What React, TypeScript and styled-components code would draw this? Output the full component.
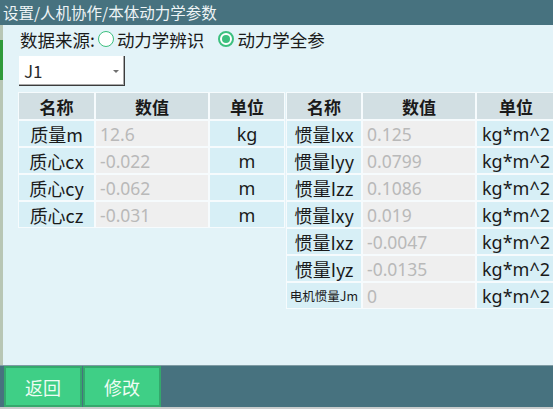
import React from "react";
import styled, { createGlobalStyle } from "styled-components";

const Global = createGlobalStyle`
  html, body { margin: 0; padding: 0; background: #e3f3f8; }
  body { font-family: "Noto Sans CJK SC", sans-serif; }
  * { box-sizing: border-box; }
`;

const Frame = styled.div`
  width: 553px;
  height: 409px;
  display: flex;
  flex-direction: column;
  overflow: hidden;
  background: #e3f3f8;
  font-family: "Noto Sans CJK SC", sans-serif;
`;

const TitleBar = styled.div`
  height: 25px;
  flex: none;
  background: #47727f;
  color: #eef4f6;
  font-family: "Noto Sans CJK SC", sans-serif;
  font-size: 15.5px;
  line-height: 25px;
  padding-left: 3px;
  white-space: nowrap;
`;

const Body = styled.div`
  flex: 1;
  display: flex;
  min-height: 0;
`;

const LeftStrip = styled.div`
  width: 3px;
  flex: none;
  background: #b8c6b5;
  display: flex;
  flex-direction: column;
  padding-top: 15px;
`;

const GreenMark = styled.div`
  height: 40px;
  background: #2f9a3a;
`;

const Content = styled.div`
  flex: 1;
  min-width: 0;
  overflow: hidden;
  padding: 2px 0 0 15px;
  display: flex;
  flex-direction: column;
  align-items: flex-start;
`;

const SourceRow = styled.div`
  height: 24px;
  display: flex;
  align-items: center;
  padding-left: 2px;
  font-family: "Noto Sans CJK SC", sans-serif;
  font-size: 17.5px;
  color: #1a1a1a;
  white-space: nowrap;
`;

const RadioDot = styled.span<{ $on?: boolean }>`
  width: 16px;
  height: 16px;
  border-radius: 50%;
  border: ${(p) => (p.$on ? "2px" : "1.5px")} solid #3cc07f;
  background: #fff;
  display: inline-flex;
  align-items: center;
  justify-content: center;
  margin: 0 3px 0 3px;
  &::after {
    content: "";
    width: 8px;
    height: 8px;
    border-radius: 50%;
    background: ${(p) => (p.$on ? "#3cc07f" : "transparent")};
  }
`;

const RadioLabel = styled.span`
  margin-right: 11px;
`;

const Select = styled.div`
  margin-top: 5px;
  margin-left: 1px;
  width: 106px;
  height: 30px;
  background: #fff;
  border-right: 1px solid #3c3c3c;
  border-bottom: 1px solid #3c3c3c;
  box-shadow: inset -1px -1px 0 #a9a9a9;
  display: flex;
  align-items: center;
  justify-content: space-between;
  padding: 0 5px 0 5px;
  font-family: "Noto Sans CJK SC", sans-serif;
  font-size: 17px;
  color: #2a2a2a;
`;

const Arrow = styled.span`
  width: 0;
  height: 0;
  border-left: 3px solid transparent;
  border-right: 3px solid transparent;
  border-top: 3px solid #707070;
  margin-top: 1px;
`;

const Tables = styled.div`
  margin-top: 6px;
  display: flex;
  align-items: flex-start;
`;

const Table = styled.div<{ $cols: string; $rows: number; $ml?: number }>`
  display: grid;
  grid-template-columns: ${(p) => p.$cols};
  grid-template-rows: 26px repeat(${(p) => p.$rows}, 25px);
  gap: 2px;
  padding: 1px;
  background: #f6fbfd;
  margin-left: ${(p) => p.$ml ?? 0}px;
  flex: none;
`;

const Head = styled.div`
  background: #d2dfe3;
  font-family: "Noto Sans CJK SC", sans-serif;
  font-weight: 700;
  font-size: 17px;
  color: #1a1a1a;
  display: flex;
  align-items: center;
  justify-content: center;
`;

const Cell = styled.div<{ $small?: boolean }>`
  background: #d7eff6;
  font-family: "Noto Sans CJK SC", sans-serif;
  font-size: ${(p) => (p.$small ? "12.5px" : "18px")};
  color: #1a1a1a;
  display: flex;
  align-items: center;
  justify-content: center;
  white-space: nowrap;
  overflow: hidden;
`;

const UnitCell = styled(Cell)`
  font-family: "Noto Sans", "Noto Sans CJK SC", sans-serif;
  font-size: 18px;
`;

const ValueCell = styled.div`
  background: #efefef;
  font-family: "Noto Sans", sans-serif;
  font-size: 17.5px;
  color: #b9b9b9;
  display: flex;
  align-items: center;
  padding-left: 4px;
  white-space: nowrap;
`;

const BottomBar = styled.div`
  height: 44px;
  flex: none;
  background: #47727f;
  border-top: 1px solid #7f9ba4;
  border-bottom: 2px solid #c9cccc;
  display: flex;
  align-items: stretch;
  gap: 1px;
  padding: 0 0 0 4px;
`;

const Button = styled.div`
  width: 78px;
  background: #3fcf86;
  border: 2px solid #34a86c;
  color: #eefcf3;
  font-family: "Noto Sans CJK SC", sans-serif;
  font-size: 18px;
  display: flex;
  align-items: center;
  justify-content: center;
`;

type Row = [string, string, string, boolean?];

const leftRows: Row[] = [
  ["质量m", "12.6", "kg"],
  ["质心cx", "-0.022", "m"],
  ["质心cy", "-0.062", "m"],
  ["质心cz", "-0.031", "m"],
];

const rightRows: Row[] = [
  ["惯量Ixx", "0.125", "kg*m^2"],
  ["惯量Iyy", "0.0799", "kg*m^2"],
  ["惯量Izz", "0.1086", "kg*m^2"],
  ["惯量Ixy", "0.019", "kg*m^2"],
  ["惯量Ixz", "-0.0047", "kg*m^2"],
  ["惯量Iyz", "-0.0135", "kg*m^2"],
  ["电机惯量Jm", "0", "kg*m^2", true],
];

const ParamTable: React.FC<{ rows: Row[]; cols: string; ml?: number }> = ({ rows, cols, ml }) => (
  <Table $cols={cols} $rows={rows.length} $ml={ml}>
    <Head>名称</Head>
    <Head>数值</Head>
    <Head>单位</Head>
    {rows.map(([n, v, u, small]) => (
      <React.Fragment key={n}>
        <Cell $small={small}>{n}</Cell>
        <ValueCell>{v}</ValueCell>
        <UnitCell>{u}</UnitCell>
      </React.Fragment>
    ))}
  </Table>
);

export default function App() {
  return (
    <Frame>
      <Global />
      <TitleBar>设置/人机协作/本体动力学参数</TitleBar>
      <Body>
        <LeftStrip>
          <GreenMark />
        </LeftStrip>
        <Content>
          <SourceRow>
            数据来源:
            <RadioDot />
            <RadioLabel>动力学辨识</RadioLabel>
            <RadioDot $on />
            <RadioLabel>动力学全参</RadioLabel>
          </SourceRow>
          <Select>
            J1
            <Arrow />
          </Select>
          <Tables>
            <ParamTable rows={leftRows} cols="75px 112px 74px" />
            <ParamTable rows={rightRows} cols="74px 112px 78px" ml={1} />
          </Tables>
        </Content>
      </Body>
      <BottomBar>
        <Button>返回</Button>
        <Button>修改</Button>
      </BottomBar>
    </Frame>
  );
}
